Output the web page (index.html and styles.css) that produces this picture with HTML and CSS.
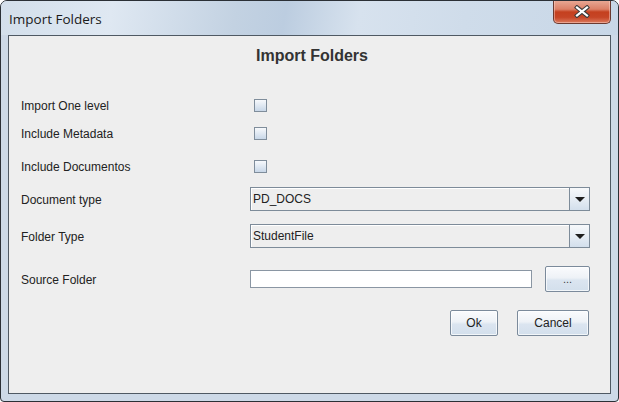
FILE: index.html
```html
<!DOCTYPE html>
<html>
<head>
<meta charset="utf-8">
<link rel="stylesheet" href="styles.css">
</head>
<body>
<div class="window">
  <div class="titlebar">
    <span class="title">Import Folders</span>
    <div class="close">
      <svg width="18" height="13" viewBox="0 0 18 13">
        <path d="M4 2.5 L14 10.5 M14 2.5 L4 10.5" stroke="#3b3b3b" stroke-width="4.2" stroke-linecap="square" fill="none"/>
        <path d="M4 2.5 L14 10.5 M14 2.5 L4 10.5" stroke="#ffffff" stroke-width="2.2" stroke-linecap="square" fill="none"/>
      </svg>
    </div>
  </div>
  <div class="panel">
    <h1 class="heading">Import Folders</h1>
    <div class="row r1"><span class="label">Import One level</span><span class="check"></span></div>
    <div class="row r2"><span class="label">Include Metadata</span><span class="check"></span></div>
    <div class="row r3"><span class="label">Include Documentos</span><span class="check"></span></div>
    <div class="row r4"><span class="label">Document type</span>
      <div class="combo"><span class="combo-value">PD_DOCS</span><span class="combo-arrow"><span class="tri"></span></span></div>
    </div>
    <div class="row r5"><span class="label">Folder Type</span>
      <div class="combo"><span class="combo-value">StudentFile</span><span class="combo-arrow"><span class="tri"></span></span></div>
    </div>
    <div class="row r6"><span class="label">Source Folder</span>
      <span class="field"></span>
      <button class="btn browse">...</button>
    </div>
    <div class="actions">
      <button class="btn ok">Ok</button>
      <button class="btn cancel">Cancel</button>
    </div>
  </div>
</div>
</body>
</html>
```

FILE: styles.css
```css
html, body {
  margin: 0;
  padding: 0;
  background: #ffffff;
}

.window {
  box-sizing: border-box;
  width: 619px;
  height: 402px;
  border: 1px solid #2b3036;
  border-radius: 7px 7px 4px 4px;
  background: #cdd9e7;
  display: flex;
  flex-direction: column;
  padding: 0 7px 7px 7px;
  overflow: hidden;
}

.titlebar {
  height: 34px;
  flex: none;
  display: flex;
  align-items: flex-start;
  margin: 0 -7px;
  padding: 0 7px 0 8px;
  background: linear-gradient(100deg, #d3dfeb 0%, #dfe8f2 18%, #c3d2e2 38%, #bccde0 46%, #d7e2ee 58%, #cfdcea 75%, #c8d7e7 100%);
}

.title {
  font-family: "Open Sans", "Liberation Sans", sans-serif;
  font-size: 13.5px;
  color: #1a1a1a;
  line-height: 18px;
  margin-top: 9px;
}

.close {
  margin-left: auto;
  margin-top: -1px;
  width: 58px;
  height: 24px;
  box-sizing: border-box;
  border: 1px solid #6b3a30;
  border-top: none;
  border-radius: 0 0 5px 5px;
  background: linear-gradient(#e9ab98 0%, #dc8067 40%, #c4401f 52%, #c64526 75%, #dc7b5e 100%);
  box-shadow: inset 0 0 0 1px rgba(255, 220, 210, 0.45);
  display: flex;
  align-items: center;
  justify-content: center;
}

.panel {
  flex: 1;
  background: #eeeeee;
  border: 1px solid #4f5963;
  padding: 10px 20px 0 12px;
  display: flex;
  flex-direction: column;
  font-family: "Liberation Sans", Arial, sans-serif;
  font-size: 12px;
  color: #222222;
}

.heading {
  margin: 0;
  padding-left: 13px;
  height: 20px;
  line-height: 20px;
  text-align: center;
  font-family: "Liberation Sans", Arial, sans-serif;
  font-weight: bold;
  font-size: 16px;
  color: #333333;
}

.row {
  display: flex;
  align-items: center;
  height: 26px;
  flex: none;
}

.r1 { margin-top: 26px; }
.r2 { margin-top: 2px; }
.r3 { margin-top: 7px; }
.r4 { margin-top: 7px; }
.r5 { margin-top: 11px; }
.r6 { margin-top: 17px; }

.label {
  width: 229px;
  flex: none;
  padding-top: 1px;
}

.check {
  box-sizing: border-box;
  width: 13px;
  height: 13px;
  margin-left: 4px;
  border: 1px solid #7f8d9b;
  background: linear-gradient(#f7f9fc 0%, #e2eaf3 45%, #c8d7e8 100%);
}

.combo {
  flex: 1;
  box-sizing: border-box;
  height: 24px;
  border: 1px solid #7d8b99;
  display: flex;
  background: #eeeeee;
}

.combo-value {
  flex: 1;
  padding-left: 2px;
  line-height: 22px;
  box-shadow: inset 1px 1px 0 #ffffff;
}

.combo-arrow {
  width: 19px;
  border-left: 1px solid #7d8b99;
  background: linear-gradient(#f7f9fb 0%, #e8eef5 45%, #d3dfec 100%);
  display: flex;
  align-items: center;
  justify-content: center;
}

.tri {
  width: 0;
  height: 0;
  border-left: 5px solid transparent;
  border-right: 5px solid transparent;
  border-top: 5px solid #1e1e1e;
  margin-top: 1px;
}

.field {
  box-sizing: border-box;
  width: 282px;
  height: 18px;
  border: 1px solid #8a96a3;
  background: #ffffff;
}

.btn {
  box-sizing: border-box;
  border: 1px solid #7b8a9b;
  border-radius: 2px;
  background: linear-gradient(#fafbfd 0%, #eef2f7 45%, #dbe5f0 55%, #d3dfec 100%);
  box-shadow: inset 0 0 0 1px rgba(255, 255, 255, 0.7);
  font-family: "Liberation Sans", Arial, sans-serif;
  font-size: 12px;
  color: #222222;
  padding: 0;
  margin: 0;
}

.browse {
  width: 45px;
  height: 26px;
  margin-left: 13px;
  font-size: 11px;
  color: #444444;
}

.actions {
  display: flex;
  justify-content: flex-end;
  gap: 19px;
  margin-top: 18px;
  margin-right: 1px;
}

.ok {
  width: 48px;
  height: 26px;
}

.cancel {
  width: 72px;
  height: 26px;
}
```
